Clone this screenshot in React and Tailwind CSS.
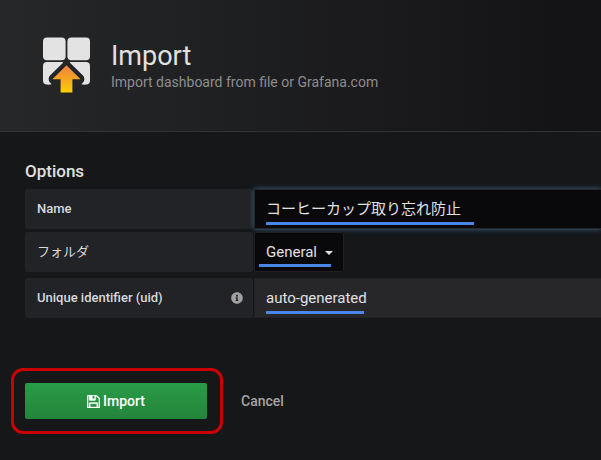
import { FaInfoCircle } from 'react-icons/fa';

function ImportLogo() {
  return (
    <svg viewBox="0 0 50 58" className="h-[58px] w-[50px] shrink-0" aria-hidden="true">
      <defs>
        <linearGradient id="arrow" x1="0" y1="0" x2="0" y2="1">
          <stop offset="0" stopColor="#f0803f" />
          <stop offset="0.5" stopColor="#f5a623" />
          <stop offset="1" stopColor="#ffce05" />
        </linearGradient>
      </defs>
      <g fill="#e3e3e3">
        <rect x="1" y="0.6" width="22.6" height="22.6" rx="4" />
        <rect x="25.4" y="0.6" width="22.6" height="22.6" rx="4" />
        <path d="M5 25H20.5Q21.7 25 20.8 26L8 38.5Q5.8 41 7.2 44.4L9.6 47.2Q8 47.8 5 47.6Q1 47.6 1 43.6V29Q1 25 5 25Z" />
        <path d="M44 25H28.5Q27.3 25 28.2 26L41 38.5Q43.2 41 41.8 44.4L39.4 47.2Q41 47.8 44 47.6Q48 47.6 48 43.6V29Q48 25 44 25Z" />
      </g>
      <path d="M24.5 28.2L38.6 42.2H30.4V55.6H18.6V42.2H10.4Z" fill="url(#arrow)" />
    </svg>
  );
}

function FloppyIcon() {
  return (
    <svg viewBox="0 128 1536 1536" className="size-[13px] fill-current stroke-current stroke-[50]" aria-hidden="true">
      <path d="M384 1536h768v-384h-768v384zM1280 1536h128v-896q0 -14 -10 -38.5t-20 -34.5l-281 -281q-10 -10 -34 -20t-39 -10v416q0 40 -28 68t-68 28h-576q-40 0 -68 -28t-28 -68v-416h-128v1280h128v-416q0 -40 28 -68t68 -28h832q40 0 68 28t28 68v416zM896 544v-320q0 -13 -9.5 -22.5t-22.5 -9.5h-192q-13 0 -22.5 9.5t-9.5 22.5v320q0 13 9.5 22.5t22.5 9.5h192q13 0 22.5 -9.5t9.5 -22.5zM1536 640v928q0 40 -28 68t-68 28h-1344q-40 0 -68 -28t-28 -68v-1344q0 -40 28 -68t68 -28h928q40 0 88 20t76 48l280 280q28 28 48 76t20 88z" />
    </svg>
  );
}

function Label({ htmlFor, children, info }) {
  return (
    <label
      htmlFor={htmlFor}
      className="flex h-10 w-[228px] shrink-0 items-center justify-between rounded-xs bg-[#222326] pr-2.5 pl-3 text-[13px] font-medium text-[#d8d9da]"
    >
      {children}
      {info && <FaInfoCircle className="size-3 text-[#a0a0a0]" />}
    </label>
  );
}

export default function App() {
  return (
    <div className="min-h-screen overflow-hidden bg-[#161719] font-['Roboto','Noto_Sans_CJK_JP',sans-serif] text-[#e0e0e0]">
      <header className="flex h-[132px] items-center gap-[19px] border-b border-[#343434] bg-linear-to-r from-[#262729] to-[#131315] px-[42px]">
        <ImportLogo />
        <div>
          <h1 className="text-[27px] leading-8">Import</h1>
          <p className="text-sm leading-5 text-[#8e8e8e]">Import dashboard from file or Grafana.com</p>
        </div>
      </header>

      <form className="pt-[27px] pl-[25px]" onSubmit={(e) => e.preventDefault()}>
        <h2 className="mb-1.5 text-[17px] leading-6 font-medium">Options</h2>

        <div className="flex gap-px">
          <Label htmlFor="name">Name</Label>
          <div className="relative flex-1">
            <input
              id="name"
              type="text"
              defaultValue="コーヒーカップ取り忘れ防止"
              className="h-10 w-full border border-r-0 border-[#262628] bg-[#09090b] px-[11px] pb-1 text-[15px] shadow-[0_0_5px_#3b6a8e] outline-none"
            />
            <span className="pointer-events-none absolute bottom-1 left-3 h-[3px] w-[208px] bg-[#4a86e8]" />
          </div>
        </div>

        <div className="mt-[3px] flex gap-px">
          <Label htmlFor="folder">
            <span className="font-normal">フォルダ</span>
          </Label>
          <div className="relative">
            <select
              id="folder"
              className="h-10 w-[90px] appearance-none rounded-xs border border-[#202022] bg-[#09090b] px-[11px] text-[15px] outline-none"
            >
              <option>General</option>
            </select>
            <span className="pointer-events-none absolute top-[19px] right-[11px] border-x-4 border-t-4 border-x-transparent border-t-[#e0e0e0]" />
            <span className="pointer-events-none absolute bottom-[5px] left-[5px] h-[3px] w-[72px] bg-[#4a86e8]" />
          </div>
        </div>

        <div className="mt-1.5 flex gap-px">
          <Label htmlFor="uid" info>Unique identifier (uid)</Label>
          <div className="relative flex-1">
            <input
              id="uid"
              type="text"
              defaultValue="auto-generated"
              className="h-10 w-full border border-r-0 border-[#232325] bg-[#272729] px-[11px] text-[15px] outline-none"
            />
            <span className="pointer-events-none absolute bottom-1 left-3 h-[3px] w-[98px] bg-[#4a86e8]" />
          </div>
        </div>

        <div className="mt-[65px] flex items-center gap-[34px] text-sm font-medium">
          <div className="relative">
            <button
              type="submit"
              className="flex h-9 w-[182px] items-center justify-center gap-[3px] rounded-xs bg-linear-to-b from-[#299c46] to-[#23843b] text-white"
            >
              <FloppyIcon />
              Import
            </button>
            <span className="pointer-events-none absolute -top-[15px] -right-4 -bottom-[15px] -left-[14px] rounded-xl border-3 border-[#cc0000]" />
          </div>
          <a href="#cancel" className="text-[#a3a3a3]">Cancel</a>
        </div>
      </form>
    </div>
  );
}
